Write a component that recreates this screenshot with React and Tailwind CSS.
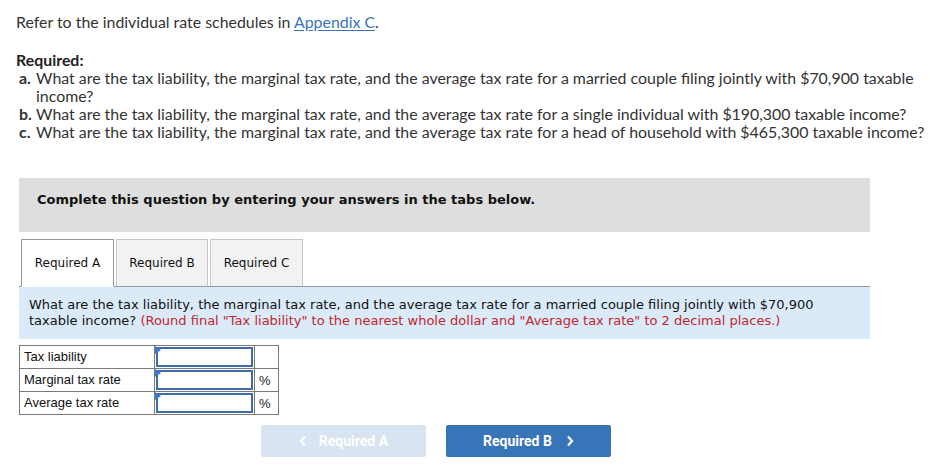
import React from "react";

function Flag() {
  return (
    <svg className="absolute left-0 top-0" width="6" height="8" viewBox="0 0 6 8">
      <polygon points="0,0 6,4 0,8" fill="#3b7ad1" />
    </svg>
  );
}

function Row({ label, unit, last }) {
  return (
    <div className={`flex ${last ? "h-[22px]" : "h-[23px] border-b border-[#7a7a7a]"}`}>
      <div className="w-[135px] border-r border-[#7a7a7a] pl-[4px] text-[13px] leading-[22px] text-[#111]" style={{ fontFamily: '"Liberation Sans", Arial, sans-serif' }}>
        {label}
      </div>
      <div className="relative w-[100px] border-r border-[#7a7a7a] bg-white">
        <div className="absolute inset-[1px] border-2 border-[#3d6ea8]"></div>
        <Flag />
      </div>
      <div className="flex-1 pl-[4px] text-[13px] leading-[24px] text-[#222]" style={{ fontFamily: '"Liberation Sans", Arial, sans-serif' }}>
        {unit}
      </div>
    </div>
  );
}

export default function App() {
  return (
    <div className="w-[930px] h-[476px] bg-white overflow-hidden relative">
      <div className="pl-[16px] pt-[13px] text-[15.9px] leading-[18px] text-[#333]" style={{ fontFamily: 'Lato, "Open Sans", sans-serif' }}>
        <div>
          Refer to the individual rate schedules in{" "}
          <span className="text-[#3a74bd] underline underline-offset-2">Appendix C</span>.
        </div>
        <div className="mt-[20px] font-bold text-[#222]">Required:</div>
        <div className="flex pl-[3px]">
          <span className="w-[17px] shrink-0 font-bold">a.</span>
          <span>What are the tax liability, the marginal tax rate, and the average tax rate for a married couple filing jointly with $70,900 taxable income?</span>
        </div>
        <div className="flex pl-[3px]">
          <span className="w-[17px] shrink-0 font-bold">b.</span>
          <span>What are the tax liability, the marginal tax rate, and the average tax rate for a single individual with $190,300 taxable income?</span>
        </div>
        <div className="flex pl-[3px]">
          <span className="w-[17px] shrink-0 font-bold">c.</span>
          <span className="whitespace-nowrap">What are the tax liability, the marginal tax rate, and the average tax rate for a head of household with $465,300 taxable income?</span>
        </div>
      </div>

      <div className="ml-[19px] w-[851px]" style={{ fontFamily: '"DejaVu Sans", Verdana, sans-serif' }}>
        <div className="mt-[37px] h-[54px] bg-[#dedede] pl-[18px] pt-[14px] text-[13px] leading-[16px] font-bold text-[#111]">
          Complete this question by entering your answers in the tabs below.
        </div>

        <div className="mt-[7px] flex items-end h-[48px] border-b border-[#999] text-[12px] text-[#111]">
          <div className="ml-[2px] w-[93px] h-[48px] -mb-px border border-[#999] border-b-white bg-white flex items-center justify-center">
            Required A
          </div>
          <div className="ml-[2px] w-[92px] h-[47px] border border-[#c6c6c6] border-b-0 bg-[#f2f2f2] flex items-center justify-center">
            Required B
          </div>
          <div className="ml-[2px] w-[93px] h-[47px] border border-[#c6c6c6] border-b-0 bg-[#f2f2f2] flex items-center justify-center">
            Required C
          </div>
        </div>

        <div className="h-[52px] bg-[#daeaf8] pl-[10px] pr-[14px] pt-[10px] text-[13px] leading-[16px] text-[#111]">
          What are the tax liability, the marginal tax rate, and the average tax rate for a married couple filing jointly with $70,900 taxable income?{" "}
          <span className="text-[#c1272d]">(Round final "Tax liability" to the nearest whole dollar and "Average tax rate" to 2 decimal places.)</span>
        </div>

        <div className="mt-[6px] w-[260px] border border-[#7a7a7a]">
          <Row label="Tax liability" unit="" />
          <Row label="Marginal tax rate" unit="%" />
          <Row label="Average tax rate" unit="%" last />
        </div>

        <div className="mt-[10px] ml-[242px] flex gap-[20px] text-[14px] font-bold text-white" style={{ fontFamily: 'Roboto, sans-serif' }}>
          <div className="w-[165px] h-[32px] rounded-[2px] bg-[#d9e4f2] flex items-center justify-center gap-[12px]">
            <svg width="8" height="12" viewBox="0 0 8 12"><polyline points="6,1.5 2,6 6,10.5" fill="none" stroke="white" strokeWidth="2.2" /></svg>
            <span>Required A</span>
          </div>
          <div className="w-[165px] h-[32px] rounded-[2px] bg-[#3874b8] flex items-center justify-center gap-[14px]">
            <span>Required B</span>
            <svg width="8" height="12" viewBox="0 0 8 12"><polyline points="2,1.5 6,6 2,10.5" fill="none" stroke="white" strokeWidth="2.2" /></svg>
          </div>
        </div>
      </div>
    </div>
  );
}
